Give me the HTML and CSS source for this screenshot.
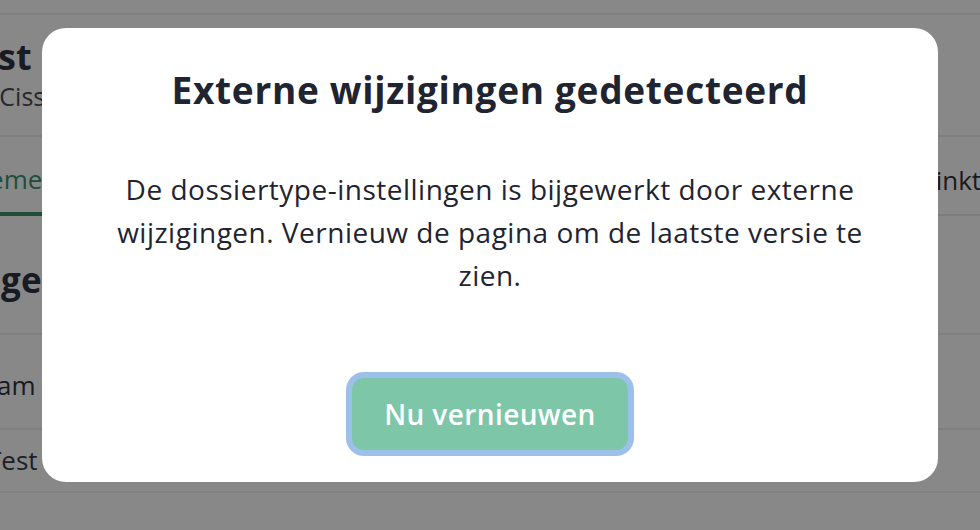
FILE: index.html
```html
<!DOCTYPE html>
<html lang="nl">
<head>
<meta charset="utf-8">
<title>Externe wijzigingen</title>
<link rel="stylesheet" href="styles.css">
</head>
<body>
<div class="page">
  <div class="topbar"></div>
  <header class="head">
    <h1 class="head-title">Test Cissie dossier</h1>
    <div class="head-sub">(Cissie instellingen)</div>
  </header>
  <nav class="tabs">
    <div class="tab active">Algemeen</div>
    <div class="tab last">Linktypes</div>
  </nav>
  <section class="section">
    <h2 class="section-title">Ontvangers</h2>
  </section>
  <div class="row row-head">Naam</div>
  <div class="row row-body">Test dossiertype</div>
  <div class="row row-empty"></div>
</div>

<div class="overlay">
  <div class="modal" role="dialog" aria-labelledby="mt">
    <h2 class="modal-title" id="mt">Externe wijzigingen gedetecteerd</h2>
    <p class="modal-text">De dossiertype-instellingen is bijgewerkt door externe wijzigingen. Vernieuw de pagina om de laatste versie te zien.</p>
    <div class="modal-actions">
      <button class="btn-primary">Nu vernieuwen</button>
    </div>
  </div>
</div>
</body>
</html>
```

FILE: styles.css
```css
* { box-sizing: border-box; }
html, body { margin: 0; padding: 0; }
body {
  width: 980px;
  height: 530px;
  overflow: hidden;
  background: #ffffff;
  font-family: "Open Sans", "Noto Sans", sans-serif;
  color: #1f2430;
}
.page {
  display: flex;
  flex-direction: column;
}
.topbar {
  height: 15px;
  background: #ffffff;
  border-bottom: 2px solid #eceef1;
}
.head {
  height: 122px;
  padding: 20px 0 0 0;
  margin-left: -44px;
  border-bottom: 2px solid #eceef1;
}
.head-title {
  margin: 0;
  font-size: 36px;
  font-weight: 700;
  line-height: 44px;
  white-space: nowrap;
}
.head-sub {
  font-size: 25px;
  line-height: 34px;
  color: #3a3f4a;
  margin-left: 36px;
  white-space: nowrap;
}
.tabs {
  display: flex;
  height: 79px;
  border-bottom: 2px solid #e4e7eb;
  white-space: nowrap;
}
.tab {
  font-size: 26px;
  display: flex;
  align-items: center;
  padding-top: 8px;
}
.tab.active {
  color: #2f8a5d;
  margin-left: -48px;
  padding-right: 4px;
  border-bottom: 4px solid #2f8a5d;
  margin-bottom: -2px;
}
.tab.last {
  margin-left: auto;
  margin-right: -57px;
}
.section {
  height: 119px;
  padding-top: 42px;
  border-bottom: 2px solid #eceef1;
}
.section-title {
  margin: 0 0 0 -129px;
  font-size: 35px;
  line-height: 44px;
  font-weight: 700;
  white-space: nowrap;
}
.row {
  border-bottom: 2px solid #eceef1;
  font-size: 26px;
  white-space: nowrap;
}
.row-head {
  height: 95px;
  padding-top: 32px;
  margin-left: -37px;
}
.row-body {
  height: 63px;
  padding-top: 12px;
  margin-left: -13px;
  color: #2b2f38;
}
.row-empty { height: 60px; }

.overlay {
  position: fixed;
  inset: 0;
  background: rgba(18, 18, 20, 0.5);
  display: flex;
  justify-content: center;
  align-items: flex-start;
  padding-top: 28px;
}
.modal {
  width: 896px;
  height: 454px;
  background: #ffffff;
  border-radius: 24px;
  padding: 38px 64px 32px;
  display: flex;
  flex-direction: column;
  align-items: center;
  text-align: center;
}
.modal-title {
  margin: 0;
  font-size: 37px;
  line-height: 48px;
  font-weight: 700;
  letter-spacing: 0.7px;
  color: #1f2430;
  white-space: nowrap;
}
.modal-text {
  margin: 54px 0 0;
  font-size: 28px;
  line-height: 43px;
  letter-spacing: 0.5px;
  color: #1f2430;
  max-width: 768px;
}
.modal-actions {
  margin-top: auto;
}
.btn-primary {
  font-family: inherit;
  width: 276px;
  height: 72px;
  border: none;
  border-radius: 12px;
  background: #7dc6a8;
  color: #ffffff;
  font-size: 28px;
  font-weight: 600;
  letter-spacing: 0.4px;
  box-shadow: 0 0 0 6px #9dc0ea;
  cursor: pointer;
}
```
